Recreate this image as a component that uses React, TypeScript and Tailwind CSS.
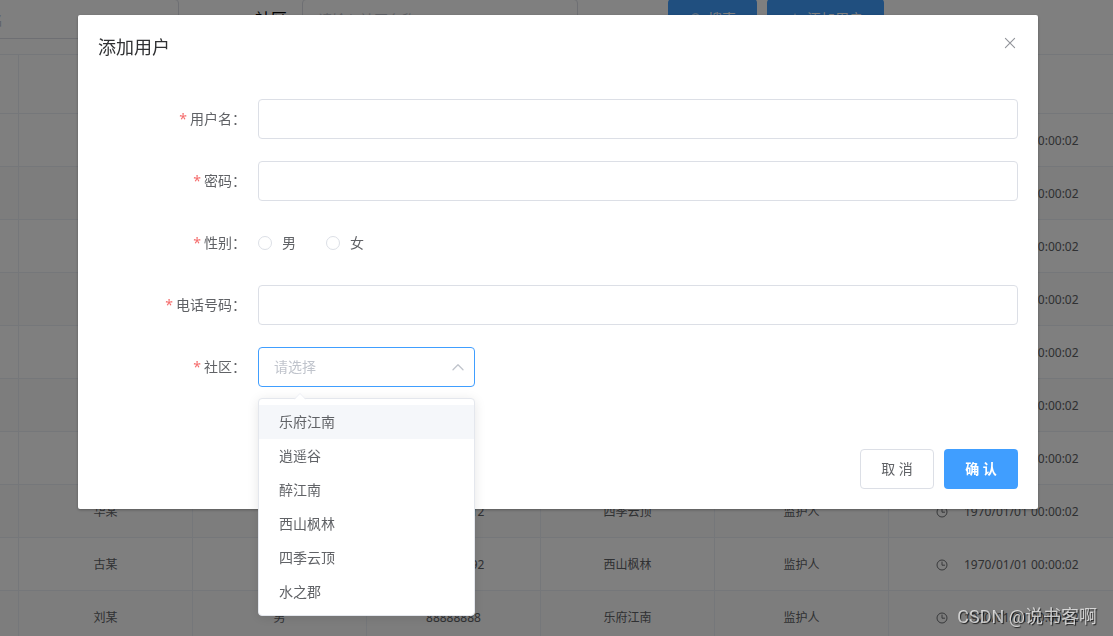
import React from 'react';

const users = [
  { name: '张某', gender: '男', phone: '888888832', community: '乐府江南', role: '监护人' },
  { name: '王某', gender: '女', phone: '888888842', community: '逍遥谷', role: '监护人' },
  { name: '李某', gender: '男', phone: '888888852', community: '醉江南', role: '监护人' },
  { name: '赵某', gender: '女', phone: '888888862', community: '西山枫林', role: '监护人' },
  { name: '孙某', gender: '男', phone: '888888872', community: '四季云顶', role: '监护人' },
  { name: '周某', gender: '女', phone: '888888882', community: '水之郡', role: '监护人' },
  { name: '吴某', gender: '男', phone: '888888802', community: '乐府江南', role: '监护人' },
  { name: '华某', gender: '男', phone: '888888812', community: '四季云顶', role: '监护人' },
  { name: '古某', gender: '男', phone: '888888892', community: '西山枫林', role: '监护人' },
  { name: '刘某', gender: '男', phone: '88888888', community: '乐府江南', role: '监护人' },
];

const communities = ['乐府江南', '逍遥谷', '醉江南', '西山枫林', '四季云顶', '水之郡'];

const cell = 'border-r border-b border-[#ebeef5] pt-0.5 text-center';

function ClockIcon() {
  return (
    <svg viewBox="0 0 12 12" className="h-3 w-3 shrink-0" fill="none" stroke="currentColor" aria-hidden="true">
      <circle cx="6" cy="6" r="5" strokeWidth="0.9" />
      <path d="M6 3v3.2h2.6" strokeWidth="0.9" strokeLinecap="round" />
    </svg>
  );
}

function SearchIcon() {
  return (
    <svg viewBox="0 0 14 14" className="h-3.5 w-3.5" fill="none" stroke="currentColor" aria-hidden="true">
      <circle cx="6.5" cy="6.5" r="4.7" />
      <path d="M10 10l3 3" strokeLinecap="round" />
    </svg>
  );
}

function PlusIcon() {
  return (
    <svg viewBox="0 0 14 14" className="h-3.5 w-3.5" fill="none" stroke="currentColor" aria-hidden="true">
      <path d="M7 2v10M2 7h10" strokeLinecap="round" />
    </svg>
  );
}

function FilterBar() {
  const field =
    'h-10 w-[276px] shrink-0 rounded border border-[#dcdfe6] bg-white px-[15px] text-sm text-[#606266] placeholder:text-[#c0c4cc]';
  const button = 'flex h-10 shrink-0 items-center gap-[5px] rounded bg-[#409eff] px-[21px] text-sm text-white';
  return (
    <div className="-mt-px flex items-center">
      <input aria-label="用户名" placeholder="请输入用户名" className={`-ml-[97px] ${field}`} />
      <label htmlFor="filter-community" className="mr-[15px] ml-[76px] shrink-0 text-base text-black">
        社区
      </label>
      <input id="filter-community" placeholder="请输入社区名称" className={field} />
      <div className="ml-[90px] flex gap-2.5">
        <button type="button" className={button}>
          <SearchIcon />
          搜索
        </button>
        <button type="button" className={button}>
          <PlusIcon />
          添加用户
        </button>
      </div>
    </div>
  );
}

function UserTable() {
  return (
    <table className="mt-[15px] w-full table-fixed border-separate border-spacing-0 border-t border-[#ebeef5] text-xs text-[#606266]">
      <colgroup>
        <col className="w-[19px]" />
        <col className="w-[174px]" />
        <col className="w-[174px]" />
        <col className="w-[174px]" />
        <col className="w-[174px]" />
        <col className="w-[174px]" />
        <col />
      </colgroup>
      <thead>
        <tr className="h-[59px] text-[#909399]">
          <th className={cell} />
          <th className={cell}>姓名</th>
          <th className={cell}>性别</th>
          <th className={cell}>电话号码</th>
          <th className={cell}>社区</th>
          <th className={cell}>角色</th>
          <th className="border-b border-[#ebeef5]" />
        </tr>
      </thead>
      <tbody>
        {users.map((u) => (
          <tr key={u.name} className="h-[53px] even:bg-[#fafafa]">
            <td className={cell} />
            <td className={cell}>{u.name}</td>
            <td className={cell}>{u.gender}</td>
            <td className={cell}>{u.phone}</td>
            <td className={cell}>{u.community}</td>
            <td className={cell}>{u.role}</td>
            <td className="border-b border-[#ebeef5] pt-0.5 pl-[47px]">
              <div className="flex items-center gap-4 whitespace-nowrap">
                <ClockIcon />
                1970/01/01 00:00:02
              </div>
            </td>
          </tr>
        ))}
      </tbody>
    </table>
  );
}

function FormRow({ label, htmlFor, children }: { label: string; htmlFor?: string; children: React.ReactNode }) {
  return (
    <div className="mb-[22px] flex h-10 items-center">
      <label htmlFor={htmlFor} className="flex w-40 shrink-0 justify-end gap-[3px] pr-3 text-sm leading-10 text-[#606266]">
        <span className="text-[#f56c6c]">*</span>
        {label}：
      </label>
      {children}
    </div>
  );
}

function GenderOption({ label }: { label: string }) {
  return (
    <label className="flex items-center gap-2.5 text-sm text-[#606266]">
      <input
        type="radio"
        name="gender"
        className="h-3.5 w-3.5 appearance-none rounded-full border border-[#dcdfe6] bg-white checked:border-4 checked:border-[#409eff]"
      />
      {label}
    </label>
  );
}

function CommunitySelect() {
  return (
    <div className="relative w-[217px]">
      <select
        id="community"
        defaultValue=""
        className="h-10 w-full appearance-none rounded border border-[#409eff] bg-white px-[15px] text-sm text-[#c0c4cc] outline-none"
      >
        <option value="" disabled>
          请选择
        </option>
        {communities.map((c) => (
          <option key={c}>{c}</option>
        ))}
      </select>
      <svg
        viewBox="0 0 14 14"
        className="pointer-events-none absolute top-[13px] right-2.5 h-3.5 w-3.5 text-[#c0c4cc]"
        fill="none"
        stroke="currentColor"
        aria-hidden="true"
      >
        <path d="M2 9.7l5-5 5 5" strokeWidth="1.3" strokeLinecap="round" strokeLinejoin="round" />
      </svg>
      <div className="absolute top-full left-0 z-10 mt-[11px] w-full rounded border border-[#e4e7ed] bg-white py-1.5 shadow-[0_2px_12px_0_rgba(0,0,0,0.1)]">
        <svg viewBox="0 0 12 7" className="absolute bottom-full left-[35px] -mb-px h-[7px] w-3" aria-hidden="true">
          <path d="M0 7l6-6 6 6z" fill="#fff" />
          <path d="M0 6.5l6-6 6 6" fill="none" stroke="#ebeef5" strokeWidth="0.8" />
        </svg>
        <ul role="listbox" aria-label="社区">
          {communities.map((c, i) => (
            <li
              key={c}
              role="option"
              aria-selected={false}
              className={`h-[34px] px-5 text-sm leading-[34px] text-[#606266] ${i === 0 ? 'bg-[#f5f7fa]' : ''}`}
            >
              {c}
            </li>
          ))}
        </ul>
      </div>
    </div>
  );
}

function AddUserDialog() {
  const input = 'h-10 w-full min-w-0 rounded border border-[#dcdfe6] bg-white px-[15px] text-sm text-[#606266]';
  return (
    <div
      role="dialog"
      aria-modal="true"
      aria-labelledby="dialog-title"
      className="w-full rounded-xs bg-white shadow-[0_1px_3px_rgba(0,0,0,0.3)]"
    >
      <header className="flex justify-between px-5 pt-5 pb-2.5">
        <h2 id="dialog-title" className="text-lg leading-6 text-[#303133]">
          添加用户
        </h2>
        <button type="button" aria-label="关闭" className="flex h-4 w-4 items-center justify-center text-[#909399]">
          <svg viewBox="0 0 16 16" className="h-4 w-4" fill="none" stroke="currentColor" aria-hidden="true">
            <path d="M3.4 3.4l9.2 9.2M12.6 3.4l-9.2 9.2" strokeWidth="1.1" strokeLinecap="round" />
          </svg>
        </button>
      </header>
      <form>
        <div className="px-5 py-[30px]">
          <FormRow label="用户名" htmlFor="username">
            <input id="username" type="text" className={input} />
          </FormRow>
          <FormRow label="密码" htmlFor="password">
            <input id="password" type="password" className={input} />
          </FormRow>
          <FormRow label="性别">
            <div role="radiogroup" aria-label="性别" className="flex gap-[30px]">
              <GenderOption label="男" />
              <GenderOption label="女" />
            </div>
          </FormRow>
          <FormRow label="电话号码" htmlFor="phone">
            <input id="phone" type="tel" className={input} />
          </FormRow>
          <FormRow label="社区" htmlFor="community">
            <CommunitySelect />
          </FormRow>
        </div>
        <footer className="flex justify-end gap-2.5 px-5 pt-2.5 pb-5">
          <button
            type="button"
            className="h-10 w-[74px] rounded border border-[#dcdfe6] bg-white text-sm text-[#606266]"
          >
            取 消
          </button>
          <button type="button" className="h-10 w-[74px] rounded bg-[#409eff] text-sm font-bold text-white">
            确 认
          </button>
        </footer>
      </form>
    </div>
  );
}

export default function App() {
  return (
    <div className="h-screen overflow-hidden bg-white font-['Noto_Sans','Noto_Sans_CJK_SC',sans-serif]">
      <main>
        <FilterBar />
        <UserTable />
      </main>
      <div className="fixed inset-0 flex items-start bg-black/50 pt-[15px] pr-[75px] pl-[78px]">
        <AddUserDialog />
      </div>
      <div className="pointer-events-none fixed right-4 bottom-[7px] font-[Roboto,'Noto_Sans_CJK_SC',sans-serif] text-lg leading-6 text-white/70 [text-shadow:1px_1px_1px_rgba(0,0,0,0.7)]">
        CSDN @说书客啊
      </div>
    </div>
  );
}
